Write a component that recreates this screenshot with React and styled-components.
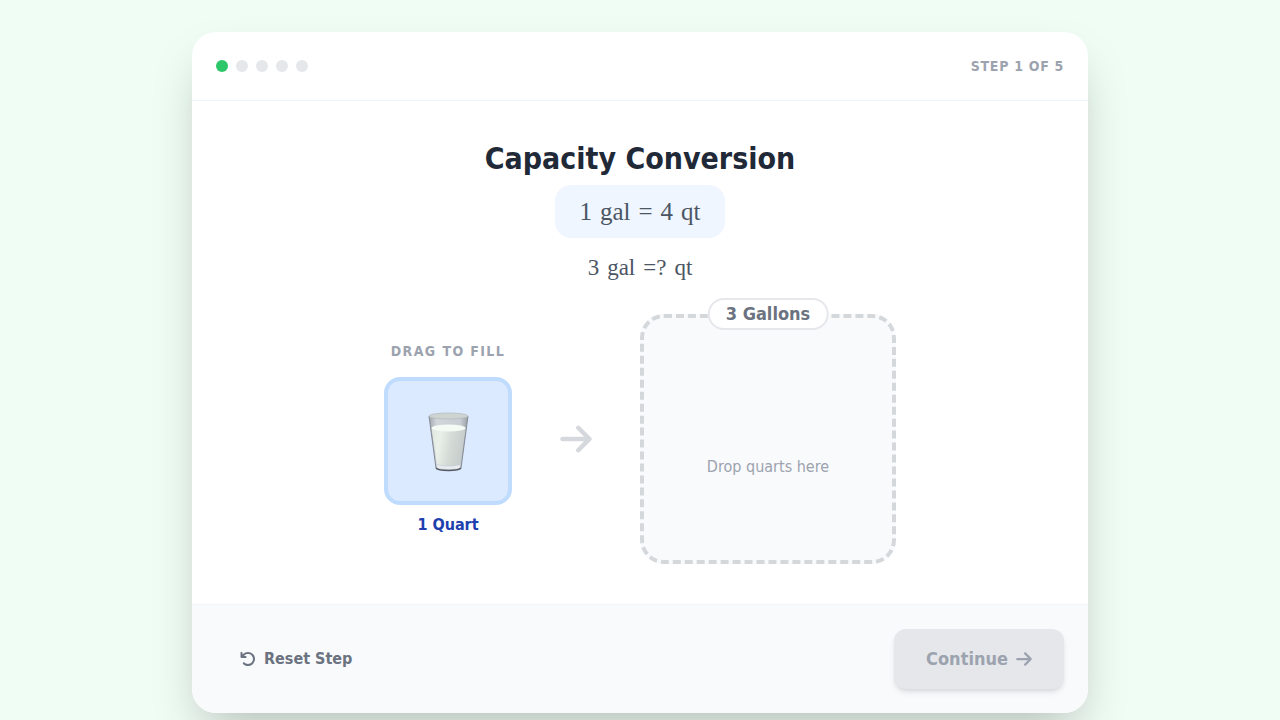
import React, { useState } from 'react';
import styled, { createGlobalStyle } from 'styled-components';
import { FaArrowRight, FaArrowRotateLeft } from 'react-icons/fa6';

const GlobalStyle = createGlobalStyle`
  *, *::before, *::after {
    box-sizing: border-box;
  }

  body {
    margin: 0;
    background-color: #f0fdf4;
    font-family: "Tahoma", "DejaVu Sans Condensed", "Noto Sans", sans-serif;
    font-size: 16px;
    line-height: 24px;
    color: #1f2937;
  }

  h1, p {
    margin: 0;
  }

  button {
    font-family: inherit;
    border: none;
  }
`;

const Page = styled.div`
  display: flex;
  justify-content: center;
  padding: 32px 16px;
`;

const Card = styled.div`
  width: 100%;
  max-width: 896px;
  background-color: #ffffff;
  border-radius: 24px;
  overflow: hidden;
  box-shadow: 0 25px 50px -12px rgba(0, 0, 0, 0.25);
`;

const Header = styled.header`
  display: flex;
  align-items: center;
  justify-content: space-between;
  padding: 24px;
  border-bottom: 1px solid #ecf5fb;
`;

const Dots = styled.div`
  display: flex;
  gap: 8px;
`;

const Dot = styled.span`
  width: 12px;
  height: 12px;
  border-radius: 50%;
  background-color: ${({ $active }) => ($active ? '#2dc76a' : '#e5e7eb')};
`;

const StepLabel = styled.span`
  font-size: 14px;
  line-height: 20px;
  font-weight: 700;
  letter-spacing: 0.05em;
  text-transform: uppercase;
  color: #9ca3af;
`;

const Main = styled.main`
  display: flex;
  flex-direction: column;
  align-items: center;
  padding: 40px;
`;

const Title = styled.h1`
  margin-bottom: 8px;
  font-size: 30px;
  line-height: 36px;
  font-weight: 700;
  text-align: center;
`;

const Equation = styled.p`
  display: flex;
  gap: 8px;
  font-family: "Liberation Serif", serif;
  color: #4b5563;
`;

const Formula = styled(Equation)`
  margin-bottom: 16px;
  padding: 12px 24px;
  border-radius: 16px;
  background-color: #eff6ff;
  font-size: 25px;
  line-height: 29px;
`;

const Question = styled(Equation)`
  margin-bottom: 32px;
  font-size: 23px;
  line-height: 28px;
`;

const Workspace = styled.div`
  display: flex;
  align-items: center;
  justify-content: center;
  gap: 48px;
`;

const Source = styled.div`
  display: flex;
  flex-direction: column;
  align-items: center;
`;

const SourceHint = styled.span`
  margin-bottom: 16px;
  font-size: 14px;
  line-height: 20px;
  font-weight: 700;
  letter-spacing: 0.1em;
  text-transform: uppercase;
  color: #9ca3af;
`;

const QuartTile = styled.div`
  display: flex;
  align-items: center;
  justify-content: center;
  width: 128px;
  height: 128px;
  margin-bottom: 8px;
  border: 4px solid #bfdbfe;
  border-radius: 16px;
  background-color: #dbeafe;
  cursor: grab;
`;

const QuartLabel = styled.span`
  font-weight: 700;
  color: #1e40af;
`;

const FlowArrow = styled(FaArrowRight)`
  width: 32px;
  height: 36px;
  color: #d5d8dc;
`;

const DropZone = styled.div`
  position: relative;
  display: flex;
  align-items: center;
  justify-content: center;
  width: 256px;
  height: 250px;
  padding-top: 56px;
  border: 4px dashed #d4d8db;
  border-radius: 24px;
  background-color: #f9fafc;
  color: #9ca3af;
`;

const ZoneLabel = styled.span`
  position: absolute;
  top: -20px;
  left: 50%;
  transform: translateX(-50%);
  padding: 0 16px;
  border: 2px solid #e5e7eb;
  border-radius: 16px;
  background-color: #ffffff;
  font-size: 18px;
  line-height: 28px;
  font-weight: 700;
  white-space: nowrap;
  color: #6b7280;
`;

const Footer = styled.footer`
  display: flex;
  align-items: center;
  justify-content: space-between;
  padding: 24px;
  border-top: 1px solid #eef7f4;
  background-color: #f9fafc;
`;

const ResetButton = styled.button`
  display: flex;
  align-items: center;
  gap: 8px;
  padding: 12px 24px;
  background: none;
  font-size: 16px;
  line-height: 24px;
  font-weight: 700;
  color: #6b7280;
  cursor: pointer;
`;

const ContinueButton = styled.button`
  display: flex;
  align-items: center;
  gap: 8px;
  padding: 16px 32px;
  border-radius: 12px;
  background-color: #e5e7eb;
  box-shadow: 0 4px 6px -1px rgba(0, 0, 0, 0.1), 0 2px 4px -2px rgba(0, 0, 0, 0.1);
  font-size: 18px;
  line-height: 28px;
  font-weight: 700;
  color: #9ca3af;

  svg {
    width: 16px;
    height: 18px;
  }
`;

const MilkGlass = () => (
  <svg width="42" height="62" viewBox="0 0 42 62" aria-hidden="true">
    <defs>
      <linearGradient id="milk" x1="0" x2="1" y1="0" y2="0.2">
        <stop offset="0" stopColor="#dfe8e0" />
        <stop offset="0.3" stopColor="#e9f0e8" />
        <stop offset="0.6" stopColor="#d5dbd6" />
        <stop offset="1" stopColor="#c5cccb" />
      </linearGradient>
      <linearGradient id="glass" x1="0" x2="1">
        <stop offset="0" stopColor="#a4a9b0" />
        <stop offset="0.2" stopColor="#d0d6da" />
        <stop offset="0.8" stopColor="#c8ced3" />
        <stop offset="1" stopColor="#9ba0a8" />
      </linearGradient>
    </defs>
    <path d="M2 6 L9 58 Q10 61 21.500 61 Q33 61 34 58 L41 6 Z" fill="url(#glass)" />
    <path d="M4.500 18 L10 54 Q21.500 57 33 54 L39 18 Z" fill="url(#milk)" />
    <ellipse cx="21.500" cy="18" rx="17" ry="3.500" fill="#f4faf4" />
    <path d="M10 55 Q21.500 58 33 55 L32.500 58 Q21.500 60 10.500 58 Z" fill="#e9edf2" />
    <path d="M2 6 L9 58 M34 58 L41 6" fill="none" stroke="#858a93" strokeWidth="1" />
    <path d="M9 58 Q11 60.500 21.500 60.500 Q32 60.500 34 58" fill="none" stroke="#555963" strokeWidth="1.500" />
    <ellipse cx="21.500" cy="6" rx="19.500" ry="3" fill="#cdd4d2" stroke="#b6bcbd" strokeWidth="0.800" />
  </svg>
);

const TOTAL_STEPS = 5;

const App = () => {
  const [step] = useState(1);

  return (
    <>
      <GlobalStyle />
      <Page>
        <Card>
          <Header>
            <Dots>
              {Array.from({ length: TOTAL_STEPS }, (_, i) => (
                <Dot key={i} $active={i + 1 === step} />
              ))}
            </Dots>
            <StepLabel>Step {step} of {TOTAL_STEPS}</StepLabel>
          </Header>
          <Main>
            <Title>Capacity Conversion</Title>
            <Formula>
              <span>1</span> <span>gal</span> <span>=</span> <span>4</span> <span>qt</span>
            </Formula>
            <Question>
              <span>3</span> <span>gal</span> <span>=?</span> <span>qt</span>
            </Question>
            <Workspace>
              <Source>
                <SourceHint>Drag to fill</SourceHint>
                <QuartTile draggable>
                  <MilkGlass />
                </QuartTile>
                <QuartLabel>1 Quart</QuartLabel>
              </Source>
              <FlowArrow />
              <DropZone>
                <ZoneLabel>3 Gallons</ZoneLabel>
                Drop quarts here
              </DropZone>
            </Workspace>
          </Main>
          <Footer>
            <ResetButton type="button">
              <FaArrowRotateLeft size={16} />
              Reset Step
            </ResetButton>
            <ContinueButton type="button" disabled>
              Continue
              <FaArrowRight />
            </ContinueButton>
          </Footer>
        </Card>
      </Page>
    </>
  );
};

export default App;
